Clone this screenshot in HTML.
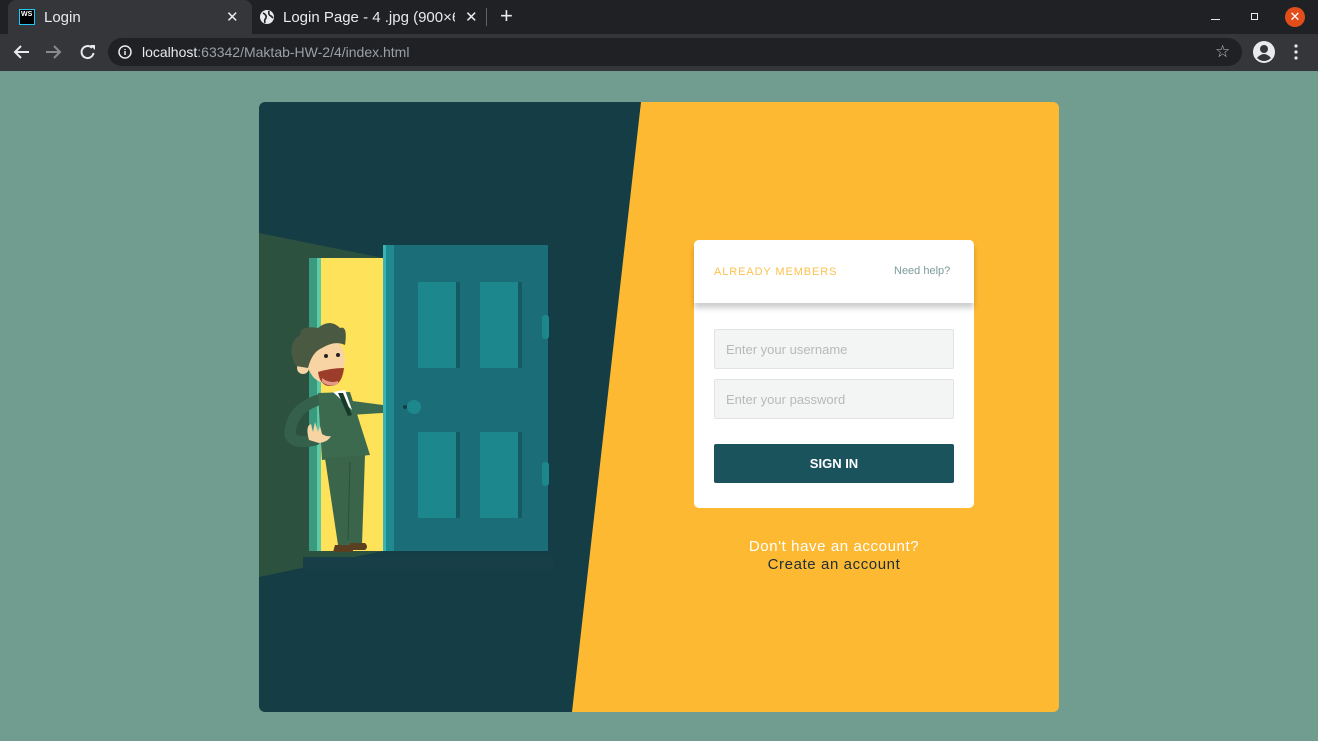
<!DOCTYPE html>
<html><head><meta charset="utf-8"><style>
*{margin:0;padding:0;box-sizing:border-box}
body{width:1318px;height:741px;overflow:hidden;background:#719d90;font-family:"Liberation Sans",sans-serif;position:relative}
.tabs{position:absolute;left:0;top:0;width:1318px;height:34px;background:#202124}
.tab1{position:absolute;left:8px;top:0;width:244px;height:34px;background:#35363a;border-radius:8px 8px 0 0}
.toolbar{position:absolute;left:0;top:34px;width:1318px;height:37px;background:#35363a}
.omni{position:absolute;left:108px;top:38px;width:1134px;height:28px;border-radius:14px;background:#202124}
.t{position:absolute;color:#e8eaed;font-size:15px;white-space:nowrap}
.card{position:absolute;left:259px;top:102px;width:800px;height:610px;border-radius:6px;overflow:hidden;background:#feb933}
.box{position:absolute;left:694px;top:240px;width:280px;height:268px;background:#fff;border-radius:5px}
.inp{position:absolute;left:20px;width:240px;height:40px;background:#f3f4f4;border:1px solid #e2e3e3;border-radius:2px;color:#b9b9b9;font-size:13px;padding:12px 0 0 11px}
</style></head><body>
<div class="tabs"></div>
<div class="tab1"></div>
<div style="position:absolute;left:19px;top:9px;width:16px;height:16px;background:#000;border:1px solid #21c8f6;color:#fff;font-size:7px;font-weight:bold;padding:1px 0 0 1px">WS</div>
<div class="t" style="left:44px;top:9px">Login</div>
<div class="t" style="left:226px;top:8px">✕</div>
<svg style="position:absolute;left:259px;top:9px" width="16" height="16"><circle cx="8" cy="8" r="7" fill="#e8eaed"/><path d="M4 4 Q8 6 7 9 Q5 11 6 14 M10 2 Q9 6 12 7 L14 9" stroke="#202124" stroke-width="1.6" fill="none"/></svg>
<div class="t" style="left:283px;top:9px;width:172px;overflow:hidden">Login Page - 4 .jpg (900×6</div>
<div class="t" style="left:465px;top:8px">✕</div>
<div style="position:absolute;left:486px;top:8px;width:1px;height:18px;background:#5f6368"></div>
<div class="t" style="left:500px;top:3px;font-size:22px">+</div>
<div style="position:absolute;left:1211px;top:19px;width:9px;height:1px;background:#e8eaed"></div>
<div style="position:absolute;left:1251px;top:13px;width:7px;height:7px;border:1px solid #e8eaed"></div>
<div style="position:absolute;left:1285px;top:7px;width:20px;height:20px;border-radius:50%;background:#e24e1b;color:#fff;font-size:13px;text-align:center;line-height:20px">✕</div>
<div class="toolbar"></div>
<div class="omni"></div>
<svg style="position:absolute;left:12px;top:42px" width="90" height="20"><path d="M17 10H3M9 4 3 10l6 6" stroke="#e8eaed" stroke-width="2" fill="none"/><path d="M34 10h14M42 4l6 6-6 6" stroke="#8a8b8e" stroke-width="2" fill="none"/><path d="M80 6a6 6 0 1 0 1.5 5" stroke="#e8eaed" stroke-width="2" fill="none"/><path d="M78 3h5v5z" fill="#e8eaed"/></svg>
<svg style="position:absolute;left:118px;top:45px" width="14" height="14"><circle cx="7" cy="7" r="6" stroke="#e8eaed" stroke-width="1.5" fill="none"/><path d="M7 6v4M7 4v1" stroke="#e8eaed" stroke-width="1.5"/></svg>
<div class="t" style="left:142px;top:44px;font-size:14px">localhost<span style="color:#9aa0a6">:63342/Maktab-HW-2/4/index.html</span></div>
<div class="t" style="left:1215px;top:42px;font-size:17px;color:#bdc1c6">☆</div>
<svg style="position:absolute;left:1253px;top:41px" width="22" height="22"><circle cx="11" cy="11" r="11" fill="#e8eaed"/><circle cx="11" cy="8" r="4" fill="#35363a"/><path d="M4 17q7-8 14 0q-7 6-14 0" fill="#35363a"/></svg>
<svg style="position:absolute;left:1294px;top:44px" width="4" height="16"><circle cx="2" cy="2" r="1.6" fill="#e8eaed"/><circle cx="2" cy="8" r="1.6" fill="#e8eaed"/><circle cx="2" cy="14" r="1.6" fill="#e8eaed"/></svg>

<div class="card">
<svg width="800" height="610" style="position:absolute;left:0;top:0">
<g transform="translate(-259,-102)">
<polygon points="259,102 641,102 572,712 259,712" fill="#143d45"/>
<polygon points="259,233 383,258 383,551 259,577" fill="#2d513f"/>
<rect x="303" y="557" width="250" height="12" fill="#183f47"/>
<rect x="309" y="258" width="74" height="293" fill="#fee35a"/>
<rect x="309" y="258" width="8" height="293" fill="#3a9a80"/>
<rect x="317" y="258" width="4" height="293" fill="#5fc9a6"/>
<rect x="383" y="245" width="165" height="306" fill="#1b6e78"/>
<rect x="383" y="245" width="11" height="306" fill="#1f8a91"/>
<rect x="383" y="245" width="3" height="306" fill="#39b4b4"/>
<g fill="#1d878e"><rect x="418" y="282" width="38" height="86"/><rect x="480" y="282" width="38" height="86"/><rect x="418" y="432" width="38" height="86"/><rect x="480" y="432" width="38" height="86"/></g>
<g fill="#155a63"><rect x="456" y="282" width="4" height="86"/><rect x="518" y="282" width="4" height="86"/><rect x="456" y="432" width="4" height="86"/><rect x="518" y="432" width="4" height="86"/></g>
<rect x="542" y="315" width="7" height="24" rx="3" fill="#1d878e"/>
<rect x="542" y="462" width="7" height="24" rx="3" fill="#1d878e"/>
<circle cx="414" cy="407" r="7" fill="#1d878e"/><circle cx="405" cy="407" r="2" fill="#143d45"/>
<path d="M345 400 L383 405 L383 413 L350 415Z" fill="#3c6a4e"/>
<path d="M318 400 Q290 410 290 435 Q295 445 315 440" stroke="#35614a" stroke-width="11" fill="none" stroke-linecap="round"/>
<path d="M318 393 L350 392 L370 455 L322 460Z" fill="#3c6a4e"/>
<path d="M325 458 L365 455 L362 545 L338 545Z" fill="#3a654b"/>
<path d="M350 462 L348 540" stroke="#2c5038" stroke-width="1"/>
<path d="M335 545 h18 v7 h-20z M350 543 h15 q4 4 0 7 h-15z" fill="#5a4020"/>
<path d="M333 392 L345 390 L352 410Z" fill="#fff"/>
<path d="M338 393 L343 393 L352 415 L348 416Z" fill="#163a2a"/>
<path d="M309 440 q-4-14 2-16 l2 8 l2-10 l3 10 l2-6 l2 8 q5 3 9 2 q-3 6-12 7z" fill="#f8d3a4"/>
<ellipse cx="326" cy="360" rx="19" ry="23" fill="#f8d3a4"/>
<circle cx="303" cy="368" r="6" fill="#f8d3a4"/>
<path d="M318 372 q13-4 26-4 q-2 18-14 18 q-10 0-12-14z" fill="#9b3d2a"/>
<path d="M322 378 q8 6 16 3 l0 3 q-8 4-16-2z" fill="#e59a85"/>
<circle cx="326" cy="356" r="2" fill="#222"/><circle cx="338" cy="355" r="2" fill="#222"/>
<path d="M296 366 Q285 345 300 335 Q300 325 318 328 Q330 318 340 328 Q348 325 345 345 Q335 340 322 348 Q312 352 308 368Z" fill="#4a5a42"/>
</g>
</svg>
</div>

<div class="box">
<div style="position:absolute;left:0;top:0;width:280px;height:63px;box-shadow:0 5px 6px rgba(0,0,0,.2);border-radius:5px 5px 0 0;background:#fff"></div>
<div style="position:absolute;left:20px;top:26px;font-size:11px;letter-spacing:.9px;color:#fdc14f">ALREADY MEMBERS</div>
<div style="position:absolute;left:200px;top:25px;font-size:11px;color:#7d9a9a">Need help?</div>
<div class="inp" style="top:89px">Enter your username</div>
<div class="inp" style="top:139px">Enter your password</div>
<div style="position:absolute;left:20px;top:204px;width:240px;height:39px;background:#1b535d;border-radius:2px;color:#fff;font-size:13px;font-weight:bold;text-align:center;line-height:39px">SIGN IN</div>
</div>
<div style="position:absolute;left:694px;top:538px;width:280px;text-align:center;color:#fff;font-size:15px;letter-spacing:.6px">Don't have an account?</div>
<div style="position:absolute;left:694px;top:556px;width:280px;text-align:center;color:#1d2e36;font-size:15px;letter-spacing:.6px">Create an account</div>
</body></html>
